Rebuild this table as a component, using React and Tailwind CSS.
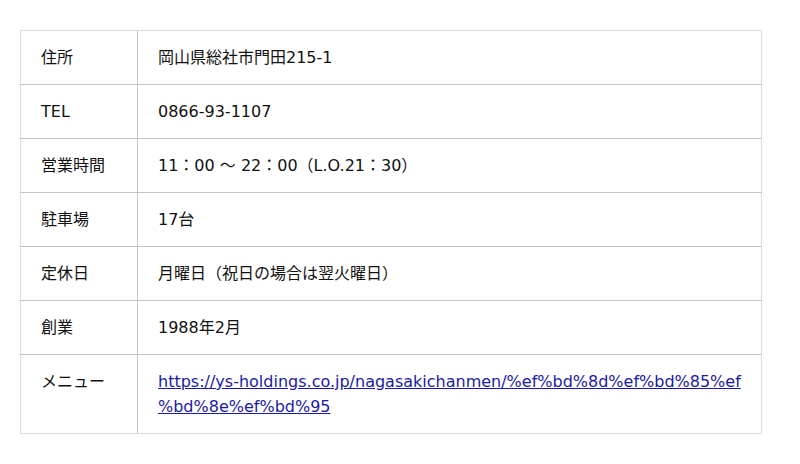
const ROWS = [
  { label: "住所", value: "岡山県総社市門田215-1" },
  { label: "TEL", value: "0866-93-1107" },
  { label: "営業時間", value: "11：00 〜 22：00（L.O.21：30）" },
  { label: "駐車場", value: "17台" },
  { label: "定休日", value: "月曜日（祝日の場合は翌火曜日）" },
  { label: "創業", value: "1988年2月" },
];

const URL_HEAD = "https://ys-holdings.co.jp/nagasakichanmen/%ef%bd%8d%ef%bd%85%ef";
const URL_TAIL = "%bd%8e%ef%bd%95";

export default function App() {
  return (
    <div
      className="bg-white w-[800px] h-[464px] pt-[30px] pl-[20px] text-[16px] leading-[25px] text-[#111]"
      style={{ fontFamily: '"DejaVu Sans", "Noto Sans CJK JP", sans-serif' }}
    >
      <table className="w-[742px] table-fixed border-collapse border border-[#dddddd]">
        <tbody>
          {ROWS.map((r, i) => (
            <tr key={r.label} className={i > 0 ? "border-t border-[#c4c4c4]" : ""}>
              <th className="w-[117px] text-left font-normal px-[20px] py-[14px] border-r border-[#c4c4c4] align-top">
                {r.label}
              </th>
              <td className="px-[20px] py-[14px] align-top">{r.value}</td>
            </tr>
          ))}
          <tr className="border-t border-[#c4c4c4]">
            <th className="w-[117px] text-left font-normal px-[20px] py-[14px] border-r border-[#c4c4c4] align-top">
              メニュー
            </th>
            <td className="pl-[20px] pr-[14px] py-[14px] align-top break-all">
              <a href="#" className="text-[#1a1aa6] underline">
                {URL_HEAD}
                <wbr />
                {URL_TAIL}
              </a>
            </td>
          </tr>
        </tbody>
      </table>
    </div>
  );
}
